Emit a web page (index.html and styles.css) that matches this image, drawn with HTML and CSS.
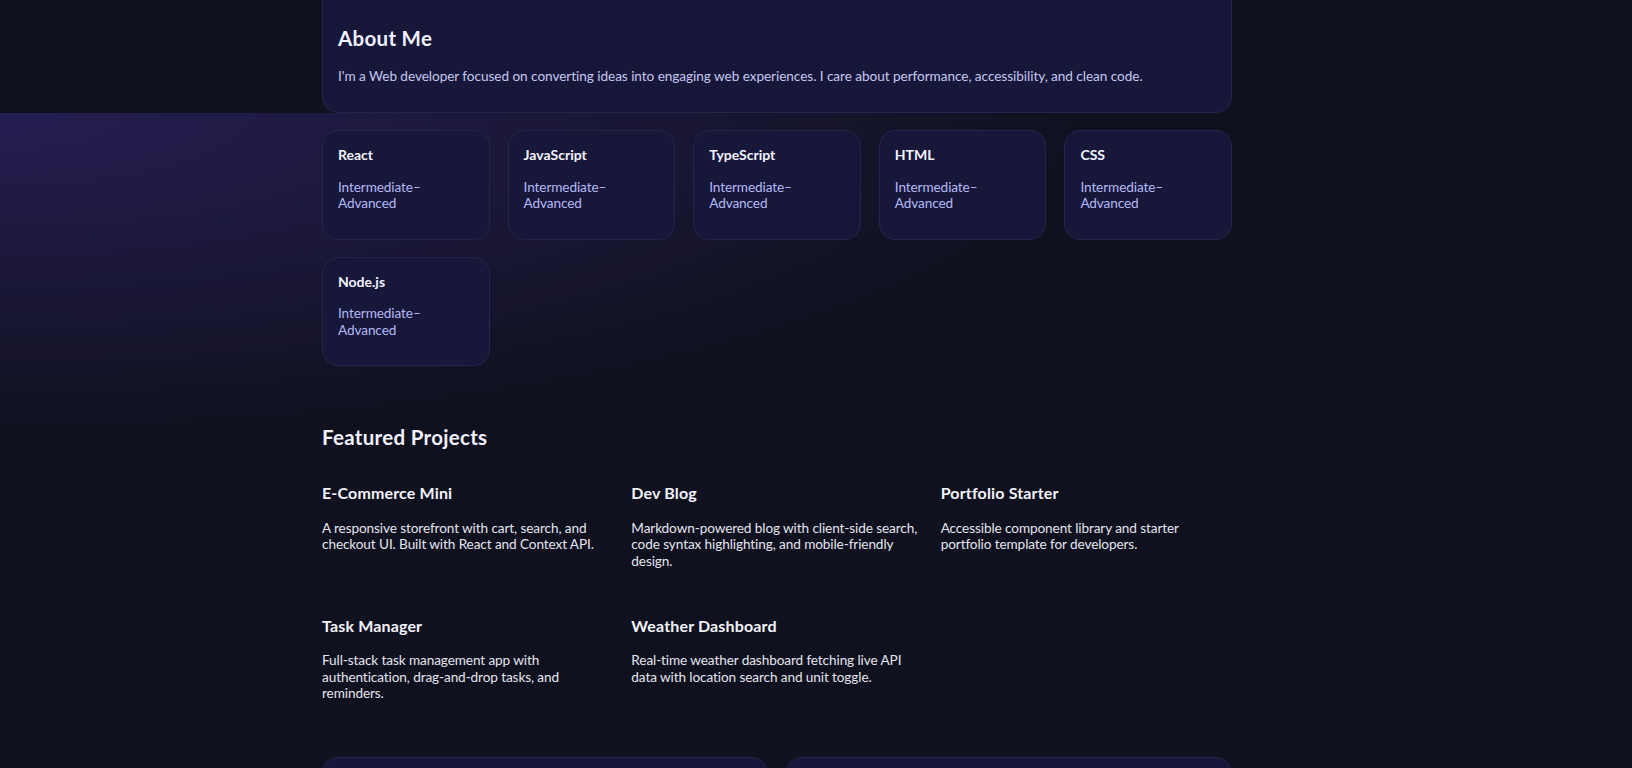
FILE: index.html
```html
<!DOCTYPE html>
<html lang="en">
<head>
<meta charset="utf-8">
<title>Portfolio</title>
<link rel="stylesheet" href="styles.css">
</head>
<body>
<section class="about">
  <div class="container">
    <div class="about-card">
      <h2 class="about-title">About Me</h2>
      <p class="about-text">I'm a Web developer focused on converting ideas into engaging web experiences. I care about performance, accessibility, and clean code.</p>
    </div>
  </div>
</section>
<main class="lower">
  <div class="container">
    <div class="skills">
      <div class="skill"><h3 class="skill-name">React</h3><p class="skill-level">Intermediate–Advanced</p></div>
      <div class="skill"><h3 class="skill-name">JavaScript</h3><p class="skill-level">Intermediate–Advanced</p></div>
      <div class="skill"><h3 class="skill-name">TypeScript</h3><p class="skill-level">Intermediate–Advanced</p></div>
      <div class="skill"><h3 class="skill-name">HTML</h3><p class="skill-level">Intermediate–Advanced</p></div>
      <div class="skill"><h3 class="skill-name">CSS</h3><p class="skill-level">Intermediate–Advanced</p></div>
      <div class="skill"><h3 class="skill-name">Node.js</h3><p class="skill-level">Intermediate–Advanced</p></div>
    </div>

    <h2 class="section-title">Featured Projects</h2>
    <div class="projects">
      <article class="project">
        <h3 class="project-title">E-Commerce Mini</h3>
        <p class="project-desc">A responsive storefront with cart, search, and checkout UI. Built with React and Context API.</p>
      </article>
      <article class="project">
        <h3 class="project-title">Dev Blog</h3>
        <p class="project-desc">Markdown-powered blog with client-side search, code syntax highlighting, and mobile-friendly design.</p>
      </article>
      <article class="project">
        <h3 class="project-title">Portfolio Starter</h3>
        <p class="project-desc">Accessible component library and starter portfolio template for developers.</p>
      </article>
      <article class="project">
        <h3 class="project-title">Task Manager</h3>
        <p class="project-desc">Full-stack task management app with authentication, drag-and-drop tasks, and reminders.</p>
      </article>
      <article class="project">
        <h3 class="project-title">Weather Dashboard</h3>
        <p class="project-desc">Real-time weather dashboard fetching live API data with location search and unit toggle.</p>
      </article>
    </div>

    <div class="panels">
      <div class="panel"></div>
      <div class="panel"></div>
    </div>
  </div>
</main>
</body>
</html>
```
FILE: styles.css
```css
* { box-sizing: border-box; }

html, body {
  margin: 0;
  padding: 0;
  background: #10111f;
  color: #f1f1ff;
  font-family: "Segoe UI", Lato, "Noto Sans", sans-serif;
  font-size: 13.6px;
}

.container {
  width: 910px;
  margin-left: 322px;
}

.about {
  background: #10111f;
}

.about-card {
  margin-top: -20px;
  background: #17173a;
  border: 1px solid #25254b;
  border-radius: 16px;
  padding: 44px 15px 26px;
}

.about-title {
  margin: 0 0 15px;
  font-size: 20.5px;
  line-height: 26px;
  font-weight: 700;
  letter-spacing: 0.3px;
  color: #f1f1ff;
}

.about-text {
  margin: 0;
  font-size: 13.6px;
  line-height: 20px;
  letter-spacing: -0.05px;
  color: #c4c7f0;
}

.lower {
  padding-top: 17px;
  min-height: 700px;
  background:
    radial-gradient(ellipse 1100px 320px at 0 0, rgba(37, 30, 82, 1) 0%, rgba(37, 30, 82, 0) 100%),
    #10111f;
}

.skills {
  display: grid;
  grid-template-columns: repeat(5, 1fr);
  column-gap: 18px;
  row-gap: 17px;
}

.skill {
  background: #17173a;
  border: 1px solid #25254b;
  border-radius: 16px;
  padding: 14px 15px;
}

.skill-name {
  margin: 0;
  font-size: 14px;
  line-height: 19px;
  font-weight: 700;
  color: #f3f3ff;
}

.skill-level {
  margin: 14.5px 0 12.7px;
  font-size: 13.6px;
  line-height: 16.7px;
  letter-spacing: -0.1px;
  color: #b3b9f6;
}

.section-title {
  margin: 57px 0 31px;
  font-size: 20.5px;
  line-height: 28px;
  font-weight: 700;
  letter-spacing: 0.3px;
  color: #f1f1ff;
}

.projects {
  display: grid;
  grid-template-columns: repeat(3, 1fr);
  column-gap: 18px;
  row-gap: 45px;
}

.project-title {
  margin: 0;
  font-size: 16px;
  line-height: 22px;
  font-weight: 700;
  letter-spacing: 0.15px;
  color: #f3f3fb;
}

.project-desc {
  margin: 15.4px 0 0;
  font-size: 13.6px;
  line-height: 16.7px;
  letter-spacing: -0.1px;
  color: #e4e5ee;
}

.panels {
  display: grid;
  grid-template-columns: repeat(2, 1fr);
  gap: 18px;
  margin-top: 54.5px;
}

.panel {
  min-height: 160px;
  background: #17173a;
  border: 1px solid #25254b;
  border-radius: 16px;
}
```
